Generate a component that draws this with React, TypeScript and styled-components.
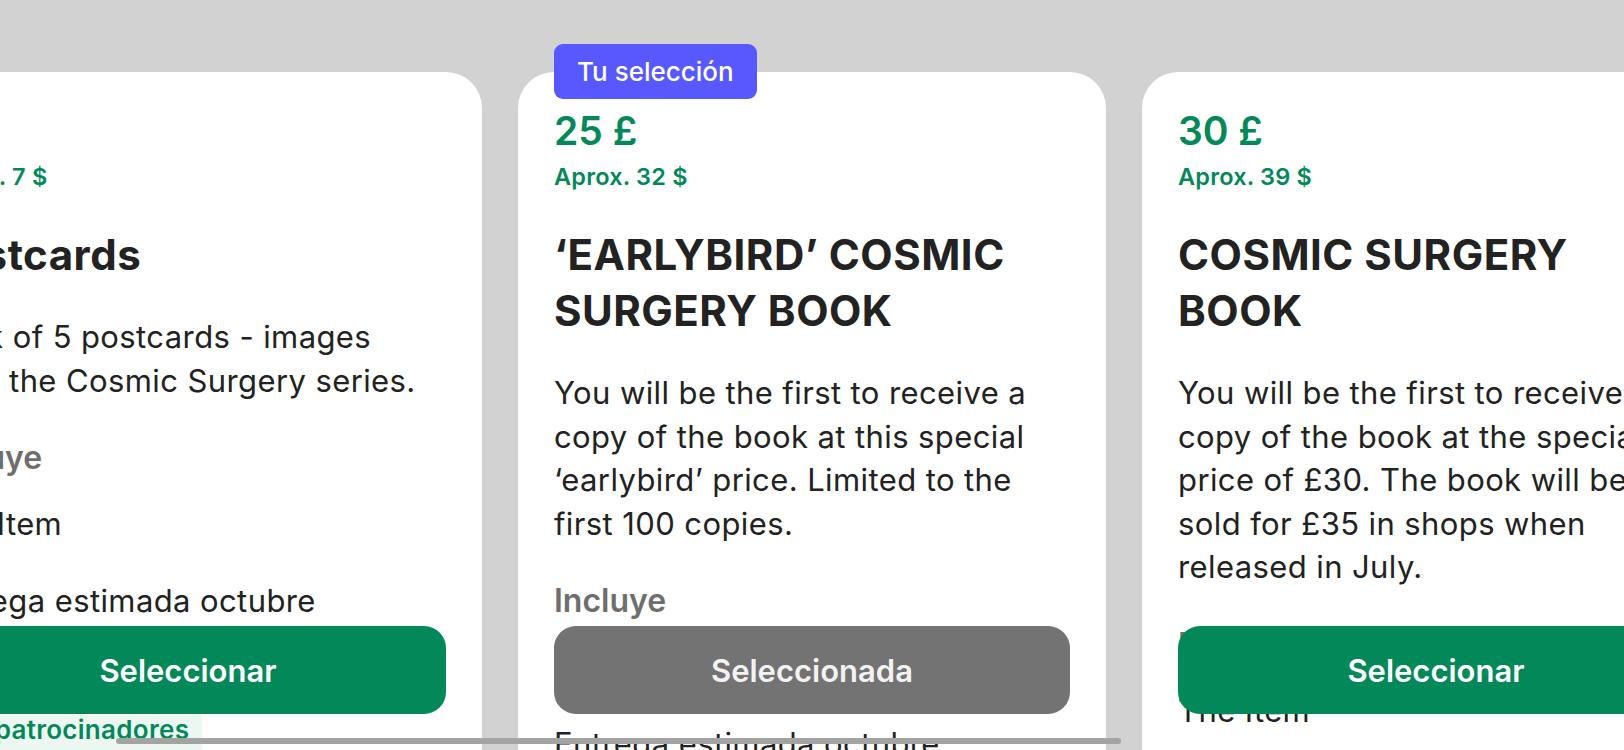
import React from "react";
import styled, { createGlobalStyle } from "styled-components";

const GlobalStyle = createGlobalStyle`
  html, body {
    margin: 0;
    padding: 0;
    background: #d2d2d2;
    overflow: hidden;
  }
  body {
    font-family: Inter, "Noto Sans", "Liberation Sans", sans-serif;
    color: #222;
  }
`;

interface Reward {
  price: string;
  approx: string;
  title: string;
  description: string;
  items: string[];
  delivery: string;
  selected?: boolean;
  sponsors?: string;
}

const rewards: Reward[] = [
  {
    price: "5 £",
    approx: "Aprox. 7 $",
    title: "Postcards",
    description: "Pack of 5 postcards - images from the Cosmic Surgery series.",
    items: ["The Item"],
    delivery: "Entrega estimada octubre",
    sponsors: "12 patrocinadores",
  },
  {
    price: "25 £",
    approx: "Aprox. 32 $",
    title: "‘EARLYBIRD’ COSMIC SURGERY BOOK",
    description:
      "You will be the first to receive a copy of the book at this special ‘earlybird’ price. Limited to the first 100 copies.",
    items: ["The Item"],
    delivery: "Entrega estimada octubre",
    selected: true,
  },
  {
    price: "30 £",
    approx: "Aprox. 39 $",
    title: "COSMIC SURGERY BOOK",
    description:
      "You will be the first to receive a copy of the book at the special price of £30. The book will be sold for £35 in shops when released in July.",
    items: ["The Item"],
    delivery: "Entrega estimada octubre",
  },
];

const Viewport = styled.div`
  position: relative;
  width: 1624px;
  height: 750px;
  overflow: hidden;
  background: #d2d2d2;
`;

const Track = styled.div`
  display: flex;
  gap: 36px;
  padding-top: 72px;
  margin-left: -106px;
`;

const Card = styled.div`
  position: relative;
  flex: 0 0 588px;
  box-sizing: border-box;
  height: 678px;
  padding: 35px 36px 0;
  background: #fff;
  border-radius: 36px 36px 0 0;
  display: flex;
  flex-direction: column;
`;

const Badge = styled.div`
  position: absolute;
  top: -28px;
  left: 36px;
  height: 55px;
  padding: 0 23px;
  display: flex;
  align-items: center;
  background: #5858ff;
  border-radius: 9px;
  color: #fff;
  font-size: 26px;
  font-weight: 500;
`;

const Price = styled.div`
  font-size: 39px;
  line-height: 48px;
  font-weight: 600;
  color: #03885a;
`;

const Approx = styled.div`
  margin-top: 8px;
  font-size: 23.5px;
  line-height: 28px;
  font-weight: 600;
  letter-spacing: 0.2px;
  color: #03885a;
`;

const Title = styled.h2`
  margin: 36px 0 0;
  font-size: 42px;
  line-height: 56px;
  font-weight: 700;
  letter-spacing: 0.5px;
  color: #222;
`;

const Description = styled.p`
  margin: 32px 0 0;
  font-size: 31px;
  line-height: 43.5px;
  letter-spacing: 0.4px;
  color: #222;
`;

const SectionLabel = styled.div`
  margin-top: 36px;
  font-size: 32px;
  line-height: 40px;
  font-weight: 600;
  color: #6e6e6e;
`;

const ItemList = styled.ul`
  list-style: none;
  margin: 24px 0 0;
  padding: 0;
`;

const Item = styled.li`
  font-size: 31px;
  line-height: 43.5px;
  letter-spacing: 0.4px;
`;

const Delivery = styled.div`
  margin-top: 33px;
  font-size: 31px;
  line-height: 43.5px;
  letter-spacing: 0.4px;
`;

const SponsorTag = styled.div`
  align-self: flex-start;
  margin-top: 93px;
  margin-left: -36px;
  padding: 0 13px 10px 66px;
  background: #edf7f2;
  color: #03885a;
  font-size: 26px;
  line-height: 30px;
  font-weight: 600;
  letter-spacing: 0.3px;
`;

const SelectButton = styled.button<{ $selected?: boolean }>`
  position: absolute;
  left: 36px;
  right: 36px;
  bottom: 36px;
  height: 88px;
  border: none;
  border-radius: 22px;
  background: ${(p) => (p.$selected ? "#737373" : "#03885a")};
  color: ${(p) => (p.$selected ? "#f2f2f2" : "#fff")};
  font-family: inherit;
  font-size: 31px;
  font-weight: 600;
  cursor: pointer;
`;

const ScrollIndicator = styled.div`
  position: absolute;
  left: 116px;
  top: 738px;
  width: 1005px;
  height: 6px;
  border-radius: 3px;
  background: #a3a3a3;
`;

const RewardCard: React.FC<{ reward: Reward }> = ({ reward }) => (
  <Card>
    {reward.selected && <Badge>Tu selección</Badge>}
    <Price>{reward.price}</Price>
    <Approx>{reward.approx}</Approx>
    <Title>{reward.title}</Title>
    <Description>{reward.description}</Description>
    <SectionLabel>Incluye</SectionLabel>
    <ItemList>
      {reward.items.map((item) => (
        <Item key={item}>{item}</Item>
      ))}
    </ItemList>
    <Delivery>{reward.delivery}</Delivery>
    {reward.sponsors && <SponsorTag>{reward.sponsors}</SponsorTag>}
    <SelectButton $selected={reward.selected}>
      {reward.selected ? "Seleccionada" : "Seleccionar"}
    </SelectButton>
  </Card>
);

const App: React.FC = () => {
  return (
    <>
      <GlobalStyle />
      <Viewport>
        <Track>
          {rewards.map((r) => (
            <RewardCard key={r.price} reward={r} />
          ))}
        </Track>
        <ScrollIndicator />
      </Viewport>
    </>
  );
};

export default App;
